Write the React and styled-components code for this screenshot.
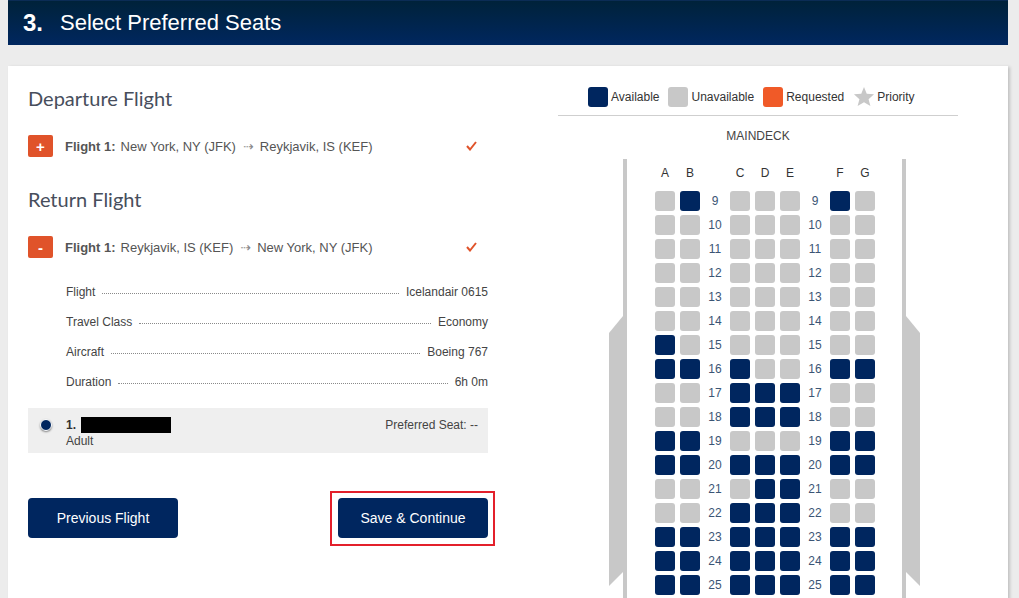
import React from 'react';
import styled, { createGlobalStyle } from 'styled-components';

const GlobalStyle = createGlobalStyle`
  html, body {
    margin: 0;
    padding: 0;
    background: #ececec;
    font-family: "Liberation Sans", Arial, sans-serif;
  }
`;

const NAVY = '#00265f';
const GRAY = '#c8c8c8';
const ORANGE = '#e0532a';

const Page = styled.div`
  height: 100vh;
  overflow: hidden;
  padding: 0 8px;
`;

const Header = styled.div`
  width: 1000px;
  height: 45px;
  box-sizing: border-box;
  background: linear-gradient(to bottom, #00223a, #00275f);
  border-top: 1px solid #0b2c55;
  display: flex;
  align-items: center;
  padding-left: 15px;
  color: #fff;
`;

const StepNum = styled.span`
  font-size: 24px;
  font-weight: bold;
  margin-right: 17px;
`;

const StepTitle = styled.span`
  font-size: 22px;
`;

const Panel = styled.div`
  width: 1000px;
  margin-top: 21px;
  background: #fff;
  box-shadow: 2px 1px 3px rgba(0, 0, 0, 0.18);
  display: flex;
  align-items: flex-start;
  padding-top: 20px;
  min-height: 600px;
`;

const LeftCol = styled.div`
  width: 460px;
  margin-left: 20px;
`;

const RightCol = styled.div`
  width: 400px;
  margin-left: 70px;
`;

const SectionTitle = styled.h2`
  margin: ${({ $top }) => $top}px 0 0;
  font-family: Lato, "Liberation Sans", sans-serif;
  font-weight: 400;
  font-size: 20px;
  line-height: 24px;
  color: #474e5c;
`;

const FlightRow = styled.div`
  display: flex;
  align-items: center;
  height: 22px;
  margin-top: 25px;
  padding-right: 11px;
  font-size: 13px;
  color: #555;
`;

const Toggle = styled.span`
  width: 25px;
  height: 22px;
  border-radius: 2px;
  background: ${ORANGE};
  color: #fff;
  font-size: 15px;
  font-weight: bold;
  display: flex;
  align-items: center;
  justify-content: center;
  margin-right: 12px;
`;

const FlightLabel = styled.b`
  margin-right: 5px;
`;

const Arrow = styled.span`
  font-family: "DejaVu Sans", sans-serif;
  font-size: 13px;
  color: #888;
  margin: 0 6px 0 7px;
`;

const Check = styled.svg`
  margin-left: auto;
`;

const Details = styled.div`
  margin-top: 19px;
  padding-left: 38px;
`;

const DetailRow = styled.div`
  display: flex;
  align-items: center;
  height: 30px;
  font-size: 12px;
  color: #444;
`;

const Leader = styled.span`
  flex: 1;
  border-top: 1px dotted #8a8a8a;
  margin: 3px 7px 0;
`;

const Passenger = styled.div`
  margin-top: 11px;
  height: 45px;
  box-sizing: border-box;
  background: #efefef;
  display: flex;
  align-items: flex-start;
  padding: 9px 10px 0 12px;
  font-size: 12px;
  color: #444;
`;

const Radio = styled.span`
  width: 10px;
  height: 10px;
  border-radius: 50%;
  background: ${NAVY};
  border: 1px solid #fff;
  box-shadow: 0 1px 2px rgba(0, 0, 0, 0.45);
  margin-top: 2px;
  margin-right: 14px;
`;

const PaxInfo = styled.div`
  line-height: 16px;
`;

const PaxName = styled.div`
  display: flex;
  align-items: center;
  font-weight: bold;
  color: #333;
`;

const Redacted = styled.span`
  display: inline-block;
  width: 90px;
  height: 16px;
  background: #000;
  margin-left: 5px;
`;

const PrefSeat = styled.div`
  margin-left: auto;
  line-height: 16px;
`;

const ButtonRow = styled.div`
  display: flex;
  justify-content: space-between;
  align-items: flex-start;
  margin-top: 38px;
  margin-right: -7px;
`;

const Button = styled.button`
  width: 150px;
  height: 40px;
  border: none;
  border-radius: 4px;
  background: ${NAVY};
  color: #fff;
  font-family: "Liberation Sans", Arial, sans-serif;
  font-size: 14px;
  margin-top: ${({ $top }) => $top || 0}px;
  cursor: pointer;
`;

const Highlight = styled.div`
  border: 2px solid #e3202b;
  padding: 5px 5px 6px 6px;
`;

const Legend = styled.div`
  display: flex;
  align-items: center;
  padding: 0 0 8px 30px;
  border-bottom: 1px solid #cfcfcf;
  font-size: 12px;
  color: #333;
`;

const LegendItem = styled.div`
  display: flex;
  align-items: center;
  margin-right: 9px;
`;

const Swatch = styled.span`
  width: 20px;
  height: 20px;
  border-radius: 3px;
  background: ${({ $color }) => $color};
  margin-right: 3px;
`;

const Deck = styled.div`
  margin-top: 13px;
  text-align: center;
  font-size: 12px;
  line-height: 14px;
  color: #444;
`;

const Fuselage = styled.div`
  display: flex;
  align-items: flex-start;
  margin: 16px 0 0 51px;
`;

const Wing = styled.svg`
  margin-top: 157px;
  flex-shrink: 0;
`;

const Cabin = styled.div`
  border-left: 4px solid ${GRAY};
  border-right: 4px solid ${GRAY};
  padding: 4px 0 20px 28px;
  width: 247px;
`;

const SeatGrid = styled.div`
  display: grid;
  grid-template-columns: repeat(9, 20px);
  column-gap: 5px;
  row-gap: 4px;
`;

const ColLetter = styled.div`
  height: 20px;
  line-height: 20px;
  text-align: center;
  font-size: 12px;
  color: #333;
  margin-bottom: 4px;
`;

const Seat = styled.div`
  width: 20px;
  height: 20px;
  border-radius: 3px;
  background: ${({ $open }) => ($open ? NAVY : GRAY)};
`;

const RowNum = styled.div`
  height: 20px;
  line-height: 20px;
  text-align: center;
  font-size: 12px;
  color: #3b5575;
`;

const seatRows = {
  9: 'UA UUU AU',
  10: 'UU UUU UU',
  11: 'UU UUU UU',
  12: 'UU UUU UU',
  13: 'UU UUU UU',
  14: 'UU UUU UU',
  15: 'AU UUU UU',
  16: 'AA AUU AA',
  17: 'UU AAA UU',
  18: 'UU AAA UU',
  19: 'AA UUU AA',
  20: 'AA AAA AA',
  21: 'UU UAA UU',
  22: 'UU AAA UU',
  23: 'AA AAA AA',
  24: 'AA AAA AA',
  25: 'AA AAA AA',
};

const letters = ['A', 'B', '', 'C', 'D', 'E', '', 'F', 'G'];

const details = [
  ['Flight', 'Icelandair 0615'],
  ['Travel Class', 'Economy'],
  ['Aircraft', 'Boeing 767'],
  ['Duration', '6h 0m'],
];

const CheckMark = () => (
  <Check width="11" height="10" viewBox="0 0 11 10">
    <polyline points="1,5 4,8.5 10,1" fill="none" stroke={ORANGE} strokeWidth="2" />
  </Check>
);

const Star = () => (
  <svg width="22" height="21" viewBox="0 0 24 23" style={{ marginRight: 2 }}>
    <polygon
      points="12,1 15,8.5 23,9 17,14.5 19,22 12,17.8 5,22 7,14.5 1,9 9,8.5"
      fill={GRAY}
    />
  </svg>
);

const renderRow = (num) => {
  const [left, mid, right] = seatRows[num].split(' ');
  const cells = [];
  const addSeats = (group, side) =>
    group.split('').forEach((s, i) =>
      cells.push(<Seat key={`${num}${side}${i}`} $open={s === 'A'} />)
    );
  addSeats(left, 'l');
  cells.push(<RowNum key={`${num}n1`}>{num}</RowNum>);
  addSeats(mid, 'm');
  cells.push(<RowNum key={`${num}n2`}>{num}</RowNum>);
  addSeats(right, 'r');
  return cells;
};

export default function App() {
  return (
    <>
      <GlobalStyle />
      <Page>
        <Header>
          <StepNum>3.</StepNum>
          <StepTitle>Select Preferred Seats</StepTitle>
        </Header>

        <Panel>
          <LeftCol>
            <SectionTitle $top={0}>Departure Flight</SectionTitle>
            <FlightRow>
              <Toggle>+</Toggle>
              <FlightLabel>Flight 1:</FlightLabel>
              New York, NY (JFK)
              <Arrow>⇢</Arrow>
              Reykjavik, IS (KEF)
              <CheckMark />
            </FlightRow>

            <SectionTitle $top={30}>Return Flight</SectionTitle>
            <FlightRow>
              <Toggle>-</Toggle>
              <FlightLabel>Flight 1:</FlightLabel>
              Reykjavik, IS (KEF)
              <Arrow>⇢</Arrow>
              New York, NY (JFK)
              <CheckMark />
            </FlightRow>

            <Details>
              {details.map(([label, value]) => (
                <DetailRow key={label}>
                  <span>{label}</span>
                  <Leader />
                  <span>{value}</span>
                </DetailRow>
              ))}
            </Details>

            <Passenger>
              <Radio />
              <PaxInfo>
                <PaxName>
                  1.<Redacted />
                </PaxName>
                <div>Adult</div>
              </PaxInfo>
              <PrefSeat>Preferred Seat: --</PrefSeat>
            </Passenger>

            <ButtonRow>
              <Button $top={7}>Previous Flight</Button>
              <Highlight>
                <Button>Save &amp; Continue</Button>
              </Highlight>
            </ButtonRow>
          </LeftCol>

          <RightCol>
            <Legend>
              <LegendItem>
                <Swatch $color={NAVY} />
                Available
              </LegendItem>
              <LegendItem>
                <Swatch $color={GRAY} />
                Unavailable
              </LegendItem>
              <LegendItem>
                <Swatch $color="#f05a28" />
                Requested
              </LegendItem>
              <LegendItem>
                <Star />
                Priority
              </LegendItem>
            </Legend>

            <Deck>MAINDECK</Deck>

            <Fuselage>
              <Wing width="14" height="271" viewBox="0 0 14 271">
                <polygon points="14,0 0,17 0,270 14,256" fill={GRAY} />
              </Wing>
              <Cabin>
                <SeatGrid>
                  {letters.map((l, i) => (
                    <ColLetter key={`c${i}`}>{l}</ColLetter>
                  ))}
                  {Object.keys(seatRows).map((n) => renderRow(Number(n)))}
                </SeatGrid>
              </Cabin>
              <Wing width="14" height="271" viewBox="0 0 14 271">
                <polygon points="0,0 14,17 14,270 0,256" fill={GRAY} />
              </Wing>
            </Fuselage>
          </RightCol>
        </Panel>
      </Page>
    </>
  );
}
